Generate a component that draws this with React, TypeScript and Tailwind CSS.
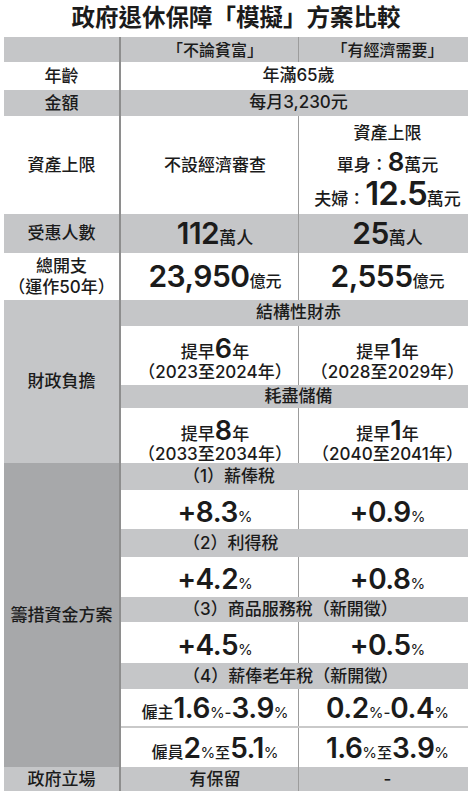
import React from "react";

const LIGHT = "bg-[#c5c6c8]";

function L({ c }: { c: string }) {
  return <span className="inline-block w-[1em] text-right">{c}</span>;
}
function R({ c }: { c: string }) {
  return <span className="inline-block w-[1em] text-left">{c}</span>;
}

function Left({ children, className = "" }: { children?: React.ReactNode; className?: string }) {
  return (
    <div className={`w-[115px] shrink-0 flex flex-col items-center justify-center text-[17px] font-medium leading-[21px] ${className}`}>
      {children}
    </div>
  );
}

function Sep() {
  return <div className="w-[2px] shrink-0 bg-[#8e8e8e]" />;
}

function Two({
  mid,
  right,
  className = "",
  top = false,
}: {
  mid: React.ReactNode;
  right: React.ReactNode;
  className?: string;
  top?: boolean;
}) {
  const j = top ? "justify-start" : "justify-center";
  return (
    <div className={`flex flex-1 ${className}`}>
      <div className={`w-[177px] shrink-0 flex flex-col items-center ${j} pl-[11px]`}>{mid}</div>
      <div className="w-[1px] shrink-0 bg-[#9c9c9c]" />
      <div className={`flex-1 flex flex-col items-center ${j} pl-[8px]`}>{right}</div>
    </div>
  );
}

function Span({ children, className = "" }: { children: React.ReactNode; className?: string }) {
  return <div className={`flex flex-1 items-center justify-center pl-[8px] ${className}`}>{children}</div>;
}

function Sub({ children, h }: { children: React.ReactNode; h: string }) {
  return (
    <div className={`flex ${h} items-center pl-[62px] ${LIGHT}`}>
      <span className="leading-none whitespace-nowrap">{children}</span>
    </div>
  );
}

function Big({ children, size = "text-[28px]" }: { children: React.ReactNode; size?: string }) {
  return <span className={`${size} font-semibold leading-none tracking-[-0.5px]`}>{children}</span>;
}

function Pct() {
  return <span className="text-[15px] font-normal leading-none">%</span>;
}

function Early({ n, a, b }: { n: string; a: string; b: string }) {
  return (
    <div className="flex flex-col items-center pt-[9px]">
      <div className="flex items-baseline text-[17px] font-medium leading-none">
        <span>提早</span>
        <span className="text-[27px] font-semibold leading-none">{n}</span>
        <span>年</span>
      </div>
      <div className="text-[17px] font-medium leading-[18px] mt-[1px] whitespace-nowrap">
        <L c="（" />
        {a}至{b}年
        <R c="）" />
      </div>
    </div>
  );
}

function Val({ a }: { a: string }) {
  return (
    <div className="flex items-baseline pt-[4px]">
      <Big size="text-[28px]">{a}</Big>
      <Pct />
    </div>
  );
}

export default function App() {
  return (
    <div className="w-[472px] h-[800px] bg-white text-[#1b1b1b] [text-spacing-trim:space-all] font-['Inter','Noto_Sans_CJK_TC',sans-serif]">
      <div className="h-[37px] flex items-center justify-center text-[23.5px] font-bold leading-none pb-[2px]">
        <span>
          政府退休保障
          <L c="「" />
          模擬
          <R c="」" />
          方案比較
        </span>
      </div>
      <div className="mx-[4px] flex flex-col text-[17px] font-medium">
        {/* header */}
        <div className={`flex h-[25px] ${LIGHT}`}>
          <Left />
          <Sep />
          <Two
            className="text-[16px] leading-none"
            mid={
              <span className="whitespace-nowrap">
                <L c="「" />
                不論貧富
                <R c="」" />
              </span>
            }
            right={
              <span className="whitespace-nowrap">
                <L c="「" />
                有經濟需要
                <R c="」" />
              </span>
            }
          />
        </div>
        {/* 年齡 */}
        <div className="flex h-[28px]">
          <Left>年齡</Left>
          <Sep />
          <Span>年滿65歲</Span>
        </div>
        {/* 金額 */}
        <div className={`flex h-[26px] ${LIGHT}`}>
          <Left>金額</Left>
          <Sep />
          <Span>每月3,230元</Span>
        </div>
        {/* 資產上限 */}
        <div className="flex h-[98px]">
          <Left>資產上限</Left>
          <Sep />
          <Two
            top
            mid={<span className="mt-[38px] leading-[22px]">不設經濟審查</span>}
            right={
              <div className="flex flex-col items-center pt-[6px]">
                <div className="leading-[22px] h-[22px]">資產上限</div>
                <div className="flex items-baseline mt-[5px] leading-none">
                  <span>單身：</span>
                  <span className="text-[26px] font-semibold leading-none">8</span>
                  <span>萬元</span>
                </div>
                <div className="flex items-baseline leading-none mt-[2px]">
                  <span>夫婦：</span>
                  <span className="text-[33px] font-semibold leading-none tracking-[-1px]">12.5</span>
                  <span>萬元</span>
                </div>
              </div>
            }
          />
        </div>
        {/* 受惠人數 */}
        <div className={`flex h-[39px] ${LIGHT}`}>
          <Left>受惠人數</Left>
          <Sep />
          <Two
            mid={
              <div className="flex items-baseline pt-[3px]">
                <Big size="text-[30px]">112</Big>
                <span>萬人</span>
              </div>
            }
            right={
              <div className="flex items-baseline pt-[3px]">
                <Big size="text-[30px]">25</Big>
                <span>萬人</span>
              </div>
            }
          />
        </div>
        {/* 總開支 */}
        <div className="flex h-[47px]">
          <Left>
            <span>總開支</span>
            <span className="whitespace-nowrap">
              <L c="（" />
              運作50年
              <R c="）" />
            </span>
          </Left>
          <Sep />
          <Two
            mid={
              <div className="flex items-baseline">
                <Big size="text-[30px]">23,950</Big>
                <span className="text-[16px]">億元</span>
              </div>
            }
            right={
              <div className="flex items-baseline">
                <Big size="text-[30px]">2,555</Big>
                <span className="text-[16px]">億元</span>
              </div>
            }
          />
        </div>
        {/* 財政負擔 */}
        <div className="flex h-[163px]">
          <Left className={LIGHT}>財政負擔</Left>
          <Sep />
          <div className="flex flex-1 flex-col">
            <div className={`flex h-[26px] ${LIGHT}`}>
              <Span>結構性財赤</Span>
            </div>
            <div className="flex h-[59px]">
              <Two top mid={<Early n="6" a="2023" b="2024" />} right={<Early n="1" a="2028" b="2029" />} />
            </div>
            <div className={`flex h-[23px] ${LIGHT}`}>
              <Span>耗盡儲備</Span>
            </div>
            <div className="flex h-[55px]">
              <Two top mid={<Early n="8" a="2033" b="2034" />} right={<Early n="1" a="2040" b="2041" />} />
            </div>
          </div>
        </div>
        {/* 籌措資金方案 */}
        <div className="flex h-[304px]">
          <Left className="bg-[#a7a8aa]">籌措資金方案</Left>
          <Sep />
          <div className="flex flex-1 flex-col">
            <Sub h="h-[27px]">
              <L c="（" />1<R c="）" />薪俸稅
            </Sub>
            <div className="flex h-[39px]">
              <Two mid={<Val a="+8.3" />} right={<Val a="+0.9" />} />
            </div>
            <Sub h="h-[28px]">
              <L c="（" />2<R c="）" />利得稅
            </Sub>
            <div className="flex h-[40px]">
              <Two mid={<Val a="+4.2" />} right={<Val a="+0.8" />} />
            </div>
            <Sub h="h-[25px]">
              <L c="（" />3<R c="）" />商品服務稅<L c="（" />新開徵<R c="）" />
            </Sub>
            <div className="flex h-[41px]">
              <Two mid={<Val a="+4.5" />} right={<Val a="+0.5" />} />
            </div>
            <Sub h="h-[26px]">
              <L c="（" />4<R c="）" />薪俸老年稅<L c="（" />新開徵<R c="）" />
            </Sub>
            <div className="flex h-[39px] border-b-[2px] border-[#c9c9c9]">
              <Two
                mid={
                  <div className="flex items-baseline pt-[3px]">
                    <span className="text-[16px]">僱主</span>
                    <Big>1.6</Big>
                    <Pct />
                    <span className="text-[15px]">-</span>
                    <Big>3.9</Big>
                    <Pct />
                  </div>
                }
                right={
                  <div className="flex items-baseline pt-[3px]">
                    <Big>0.2</Big>
                    <Pct />
                    <span className="text-[15px]">-</span>
                    <Big>0.4</Big>
                    <Pct />
                  </div>
                }
              />
            </div>
            <div className="flex h-[39px]">
              <Two
                mid={
                  <div className="flex items-baseline pt-[3px]">
                    <span className="text-[16px]">僱員</span>
                    <Big>2</Big>
                    <Pct />
                    <span className="text-[15px]">至</span>
                    <Big>5.1</Big>
                    <Pct />
                  </div>
                }
                right={
                  <div className="flex items-baseline pt-[3px]">
                    <Big>1.6</Big>
                    <Pct />
                    <span className="text-[15px]">至</span>
                    <Big>3.9</Big>
                    <Pct />
                  </div>
                }
              />
            </div>
          </div>
        </div>
        {/* 政府立場 */}
        <div className={`flex h-[24px] ${LIGHT}`}>
          <Left>政府立場</Left>
          <Sep />
          <Two className="leading-none" mid={<span>有保留</span>} right={<span>-</span>} />
        </div>
      </div>
    </div>
  );
}
